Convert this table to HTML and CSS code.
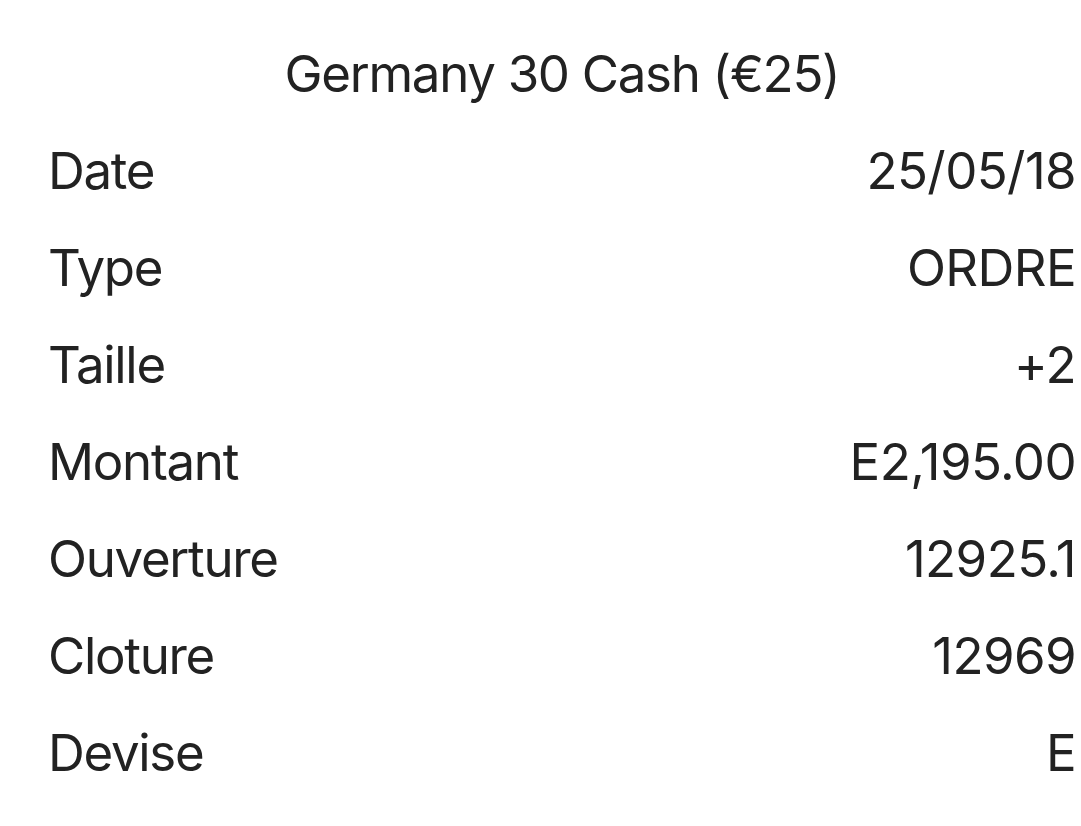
FILE: index.html
```html
<!DOCTYPE html>
<html lang="fr">
<head>
<meta charset="utf-8">
<link rel="stylesheet" href="styles.css">
</head>
<body>
<div class="sheet">
  <h1 class="title">Germany 30 Cash (€25)</h1>
  <div class="row"><span class="label">Date</span><span class="value">25/05/18</span></div>
  <div class="row"><span class="label">Type</span><span class="value">ORDRE</span></div>
  <div class="row"><span class="label">Taille</span><span class="value">+2</span></div>
  <div class="row"><span class="label">Montant</span><span class="value">E2,195.00</span></div>
  <div class="row"><span class="label">Ouverture</span><span class="value">12925.1</span></div>
  <div class="row"><span class="label">Cloture</span><span class="value">12969</span></div>
  <div class="row"><span class="label">Devise</span><span class="value">E</span></div>
</div>
</body>
</html>
```

FILE: styles.css
```css
html, body {
  margin: 0;
  padding: 0;
  background: #ffffff;
}
.sheet {
  padding: 25px 5px 0 48px;
  font-family: Inter, "Noto Sans", sans-serif;
  font-size: 51px;
  line-height: 97px;
  letter-spacing: -1.3px;
  color: #222222;
}
.title {
  margin: 0;
  font-size: 51px;
  font-weight: 400;
  text-align: center;
  line-height: 97px;
}
.row {
  display: flex;
  justify-content: space-between;
  align-items: baseline;
}
.value {
  letter-spacing: -0.6px;
}
```
